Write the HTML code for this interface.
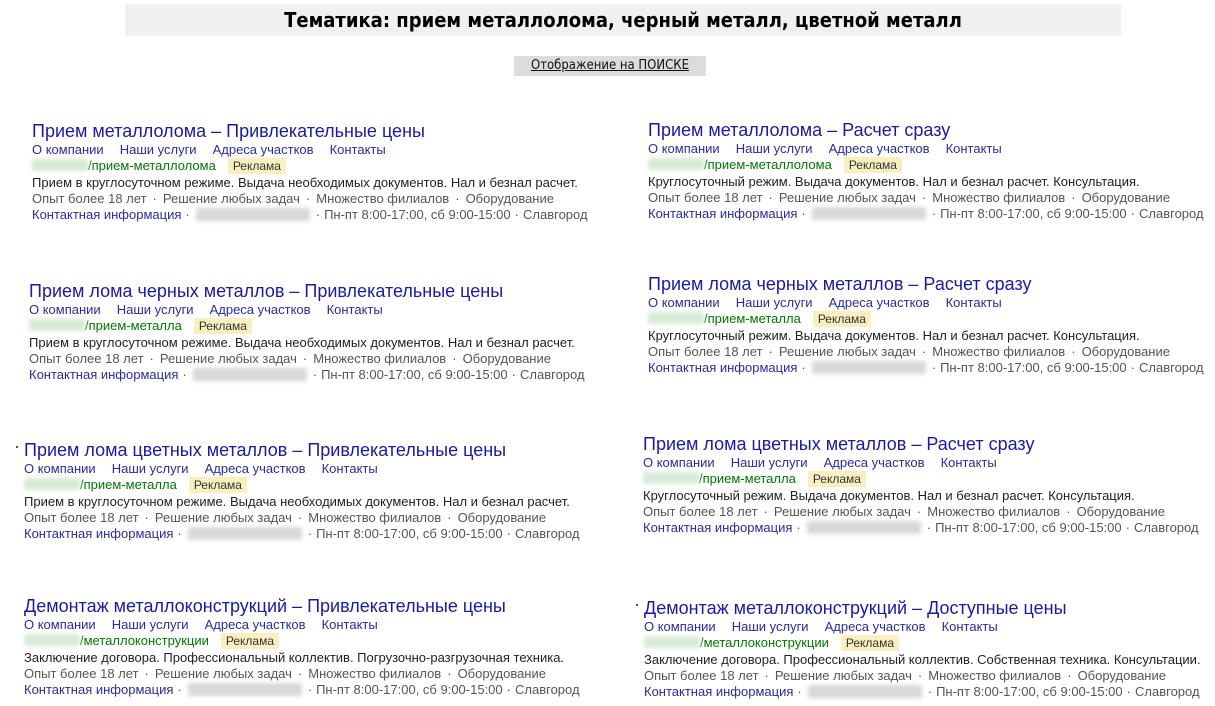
<!DOCTYPE html>
<html><head><meta charset="utf-8">
<style>
*{margin:0;padding:0;box-sizing:border-box}
body{width:1215px;height:706px;background:#fff;position:relative;overflow:hidden;font-family:"Liberation Sans",Arial,sans-serif}
.hdr{position:absolute;left:125px;top:4px;width:996px;height:32px;background:#f0f0f0;text-align:center;font:bold 20px/32px "DejaVu Sans Condensed","Liberation Sans Narrow","Liberation Sans",sans-serif;color:#000}
.btn{position:absolute;left:514px;top:56px;width:192px;height:20px;background:#dcdcdc;text-align:center;font:13px/20px "DejaVu Sans Condensed","Liberation Sans Narrow",sans-serif;color:#111;text-decoration:underline}
.ad{position:absolute;font-size:13px;line-height:16px;white-space:nowrap}
.t{font-size:18px;line-height:21px;color:#1a1aa6;height:21px}
.sl{color:#2b2ba0;height:16px}
.sl span{margin-right:16px}
.u{color:#007700;height:17px}
.bl{display:inline-block;width:56px;height:12px;background:#d6ebd6;filter:blur(2px);vertical-align:-1px}
.bg{display:inline-block;width:114px;height:13px;background:#d8d8d8;filter:blur(2px);vertical-align:-2px;margin:0 2px}
.r{display:inline-block;background:#fbefc0;color:#333;font-size:12px;line-height:16px;padding:0 5px;margin-left:12px}
.d{color:#222;height:16px}
.f{color:#555;height:16px}
.c{color:#555}
.c a{color:#2b2ba0;text-decoration:none}
i{font-style:normal;margin:0 6px}
.c i{margin:0 4px}
.dot{position:absolute;width:2px;height:2px;background:#555}
</style></head><body>
<div class="hdr">Тематика: прием металлолома, черный металл, цветной металл</div>
<div class="btn">Отображение на ПОИСКЕ</div>

<div class="ad" style="left:32px;top:121px">
<div class="t">Прием металлолома – Привлекательные цены</div>
<div class="sl"><span>О компании</span><span>Наши услуги</span><span>Адреса участков</span><span>Контакты</span></div>
<div class="u"><span class="bl"></span>/прием-металлолома<span class="r">Реклама</span></div>
<div class="d">Прием в круглосуточном режиме. Выдача необходимых документов. Нал и безнал расчет.</div>
<div class="f">Опыт более 18 лет<i>·</i>Решение любых задач<i>·</i>Множество филиалов<i>·</i>Оборудование</div>
<div class="c"><a>Контактная информация</a><i>·</i><span class="bg"></span><i>·</i>Пн-пт 8:00-17:00, сб 9:00-15:00<i>·</i>Славгород</div>
</div>

<div class="ad" style="left:29px;top:281px">
<div class="t">Прием лома черных металлов – Привлекательные цены</div>
<div class="sl"><span>О компании</span><span>Наши услуги</span><span>Адреса участков</span><span>Контакты</span></div>
<div class="u"><span class="bl"></span>/прием-металла<span class="r">Реклама</span></div>
<div class="d">Прием в круглосуточном режиме. Выдача необходимых документов. Нал и безнал расчет.</div>
<div class="f">Опыт более 18 лет<i>·</i>Решение любых задач<i>·</i>Множество филиалов<i>·</i>Оборудование</div>
<div class="c"><a>Контактная информация</a><i>·</i><span class="bg"></span><i>·</i>Пн-пт 8:00-17:00, сб 9:00-15:00<i>·</i>Славгород</div>
</div>

<div class="dot" style="left:16px;top:446px"></div>
<div class="ad" style="left:24px;top:440px">
<div class="t">Прием лома цветных металлов – Привлекательные цены</div>
<div class="sl"><span>О компании</span><span>Наши услуги</span><span>Адреса участков</span><span>Контакты</span></div>
<div class="u"><span class="bl"></span>/прием-металла<span class="r">Реклама</span></div>
<div class="d">Прием в круглосуточном режиме. Выдача необходимых документов. Нал и безнал расчет.</div>
<div class="f">Опыт более 18 лет<i>·</i>Решение любых задач<i>·</i>Множество филиалов<i>·</i>Оборудование</div>
<div class="c"><a>Контактная информация</a><i>·</i><span class="bg"></span><i>·</i>Пн-пт 8:00-17:00, сб 9:00-15:00<i>·</i>Славгород</div>
</div>

<div class="ad" style="left:24px;top:596px">
<div class="t">Демонтаж металлоконструкций – Привлекательные цены</div>
<div class="sl"><span>О компании</span><span>Наши услуги</span><span>Адреса участков</span><span>Контакты</span></div>
<div class="u"><span class="bl"></span>/металлоконструкции<span class="r">Реклама</span></div>
<div class="d">Заключение договора. Профессиональный коллектив. Погрузочно-разгрузочная техника.</div>
<div class="f">Опыт более 18 лет<i>·</i>Решение любых задач<i>·</i>Множество филиалов<i>·</i>Оборудование</div>
<div class="c"><a>Контактная информация</a><i>·</i><span class="bg"></span><i>·</i>Пн-пт 8:00-17:00, сб 9:00-15:00<i>·</i>Славгород</div>
</div>

<div class="ad" style="left:648px;top:120px">
<div class="t">Прием металлолома – Расчет сразу</div>
<div class="sl"><span>О компании</span><span>Наши услуги</span><span>Адреса участков</span><span>Контакты</span></div>
<div class="u"><span class="bl"></span>/прием-металлолома<span class="r">Реклама</span></div>
<div class="d">Круглосуточный режим. Выдача документов. Нал и безнал расчет. Консультация.</div>
<div class="f">Опыт более 18 лет<i>·</i>Решение любых задач<i>·</i>Множество филиалов<i>·</i>Оборудование</div>
<div class="c"><a>Контактная информация</a><i>·</i><span class="bg"></span><i>·</i>Пн-пт 8:00-17:00, сб 9:00-15:00<i>·</i>Славгород</div>
</div>

<div class="ad" style="left:648px;top:274px">
<div class="t">Прием лома черных металлов – Расчет сразу</div>
<div class="sl"><span>О компании</span><span>Наши услуги</span><span>Адреса участков</span><span>Контакты</span></div>
<div class="u"><span class="bl"></span>/прием-металла<span class="r">Реклама</span></div>
<div class="d">Круглосуточный режим. Выдача документов. Нал и безнал расчет. Консультация.</div>
<div class="f">Опыт более 18 лет<i>·</i>Решение любых задач<i>·</i>Множество филиалов<i>·</i>Оборудование</div>
<div class="c"><a>Контактная информация</a><i>·</i><span class="bg"></span><i>·</i>Пн-пт 8:00-17:00, сб 9:00-15:00<i>·</i>Славгород</div>
</div>

<div class="ad" style="left:643px;top:434px">
<div class="t">Прием лома цветных металлов – Расчет сразу</div>
<div class="sl"><span>О компании</span><span>Наши услуги</span><span>Адреса участков</span><span>Контакты</span></div>
<div class="u"><span class="bl"></span>/прием-металла<span class="r">Реклама</span></div>
<div class="d">Круглосуточный режим. Выдача документов. Нал и безнал расчет. Консультация.</div>
<div class="f">Опыт более 18 лет<i>·</i>Решение любых задач<i>·</i>Множество филиалов<i>·</i>Оборудование</div>
<div class="c"><a>Контактная информация</a><i>·</i><span class="bg"></span><i>·</i>Пн-пт 8:00-17:00, сб 9:00-15:00<i>·</i>Славгород</div>
</div>

<div class="dot" style="left:636px;top:604px"></div>
<div class="ad" style="left:644px;top:598px">
<div class="t">Демонтаж металлоконструкций – Доступные цены</div>
<div class="sl"><span>О компании</span><span>Наши услуги</span><span>Адреса участков</span><span>Контакты</span></div>
<div class="u"><span class="bl"></span>/металлоконструкции<span class="r">Реклама</span></div>
<div class="d">Заключение договора. Профессиональный коллектив. Собственная техника. Консультации.</div>
<div class="f">Опыт более 18 лет<i>·</i>Решение любых задач<i>·</i>Множество филиалов<i>·</i>Оборудование</div>
<div class="c"><a>Контактная информация</a><i>·</i><span class="bg"></span><i>·</i>Пн-пт 8:00-17:00, сб 9:00-15:00<i>·</i>Славгород</div>
</div>
</body></html>
